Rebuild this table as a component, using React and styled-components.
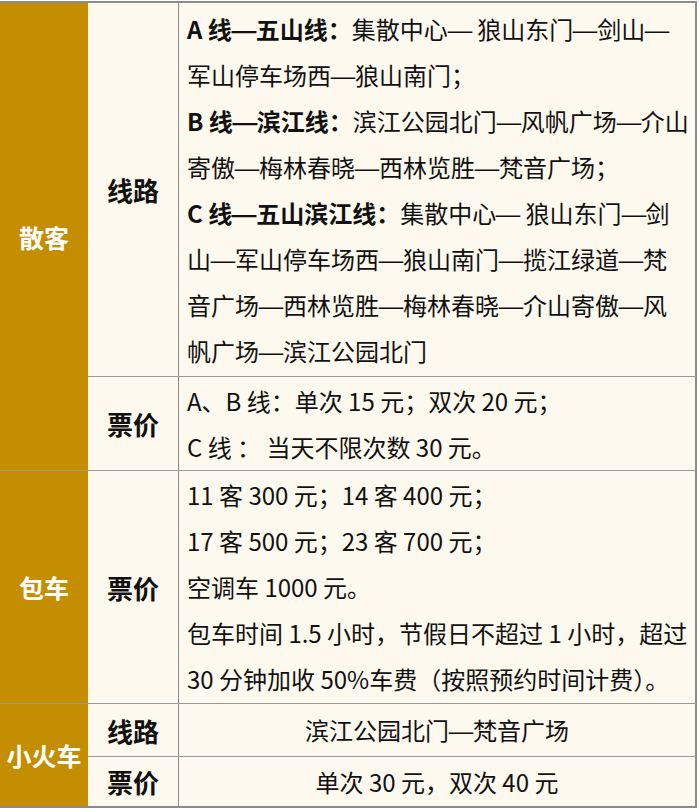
import React from 'react';
import styled, { createGlobalStyle } from 'styled-components';

const GlobalStyle = createGlobalStyle`
  body {
    margin: 0;
    background: #ffffff;
    font-family: "Noto Sans CJK SC", "Noto Sans", sans-serif;
  }
`;

const StyledTable = styled.div`
  display: grid;
  grid-template-columns: 88px 91px 1fr;
  grid-template-rows: 374px 94px 233px 53px 49px;
  width: 697px;
  margin-top: 1px;
  background: #fdf9ee;
  border-top: 2px solid #8c8c8c;
  border-right: 2px solid #8c8c8c;
  border-bottom: 2px solid #8c8c8c;
  box-sizing: border-box;
  color: #111;
`;

const StyledGroup = styled.div`
  grid-column: 1;
  grid-row: ${(props) => props.$rows};
  display: flex;
  align-items: center;
  justify-content: center;
  background: #c58e00;
  color: #ffffff;
  font-size: 25px;
  font-weight: 700;
  border-bottom: ${(props) => (props.$last ? 'none' : '1px solid #9a9a9a')};
`;

const StyledLabel = styled.div`
  grid-column: 2;
  grid-row: ${(props) => props.$row};
  display: flex;
  align-items: center;
  justify-content: center;
  font-size: 26px;
  font-weight: 700;
  border-right: 1px solid #8c8c8c;
  border-bottom: ${(props) => (props.$last ? 'none' : '1px solid #9a9a9a')};
`;

const StyledCell = styled.div`
  grid-column: 3;
  grid-row: ${(props) => props.$row};
  display: flex;
  flex-direction: column;
  justify-content: center;
  align-items: ${(props) => (props.$center ? 'center' : 'flex-start')};
  padding-left: ${(props) => (props.$center ? '0' : '8px')};
  font-size: 24px;
  line-height: 46px;
  border-bottom: ${(props) => (props.$last ? 'none' : '1px solid #9a9a9a')};
`;

const StyledLine = styled.div`
  white-space: pre;
`;

const StyledStrong = styled.b`
  font-weight: 700;
`;

const StyledDash = styled.span`
  display: inline-block;
  width: 1em;
  text-align: center;
  transform: scaleX(1.28);
`;

// split on em dashes so each one can be stretched to a full em
const withDashes = (text) =>
  text.split('—').flatMap((part, i) =>
    i === 0 ? [part] : [<StyledDash key={i}>—</StyledDash>, part]
  );

const routeLines = [
  ['A 线—五山线：', '集散中心— 狼山东门—剑山—'],
  [null, '军山停车场西—狼山南门；'],
  ['B 线—滨江线：', '滨江公园北门—风帆广场—介山'],
  [null, '寄傲—梅林春晓—西林览胜—梵音广场；'],
  ['C 线—五山滨江线：', '集散中心— 狼山东门—剑'],
  [null, '山—军山停车场西—狼山南门—揽江绿道—梵'],
  [null, '音广场—西林览胜—梅林春晓—介山寄傲—风'],
  [null, '帆广场—滨江公园北门'],
];

const charterLines = [
  '11 客 300 元；14 客 400 元；',
  '17 客 500 元；23 客 700 元；',
  '空调车 1000 元。',
  '包车时间 1.5 小时，节假日不超过 1 小时，超过',
  '30 分钟加收 50%车费（按照预约时间计费）。',
];

const App = () => (
  <>
    <GlobalStyle />
    <StyledTable>
      <StyledGroup $rows="1 / 3">散客</StyledGroup>
      <StyledLabel $row={1}>线路</StyledLabel>
      <StyledCell $row={1}>
        {routeLines.map(([title, rest], i) => (
          <StyledLine key={i}>
            {title && <StyledStrong>{withDashes(title)}</StyledStrong>}
            {withDashes(rest)}
          </StyledLine>
        ))}
      </StyledCell>
      <StyledLabel $row={2}>票价</StyledLabel>
      <StyledCell $row={2}>
        <StyledLine>A、B 线：单次 15 元；双次 20 元；</StyledLine>
        <StyledLine>C 线 ： 当天不限次数 30 元。</StyledLine>
      </StyledCell>

      <StyledGroup $rows="3 / 4">包车</StyledGroup>
      <StyledLabel $row={3}>票价</StyledLabel>
      <StyledCell $row={3}>
        {charterLines.map((line) => (
          <StyledLine key={line}>{line}</StyledLine>
        ))}
      </StyledCell>

      <StyledGroup $rows="4 / 6" $last>小火车</StyledGroup>
      <StyledLabel $row={4}>线路</StyledLabel>
      <StyledCell $row={4} $center>
        <StyledLine>{withDashes('滨江公园北门—梵音广场')}</StyledLine>
      </StyledCell>
      <StyledLabel $row={5} $last>票价</StyledLabel>
      <StyledCell $row={5} $center $last>
        <StyledLine>单次 30 元，双次 40 元</StyledLine>
      </StyledCell>
    </StyledTable>
  </>
);

export default App;
